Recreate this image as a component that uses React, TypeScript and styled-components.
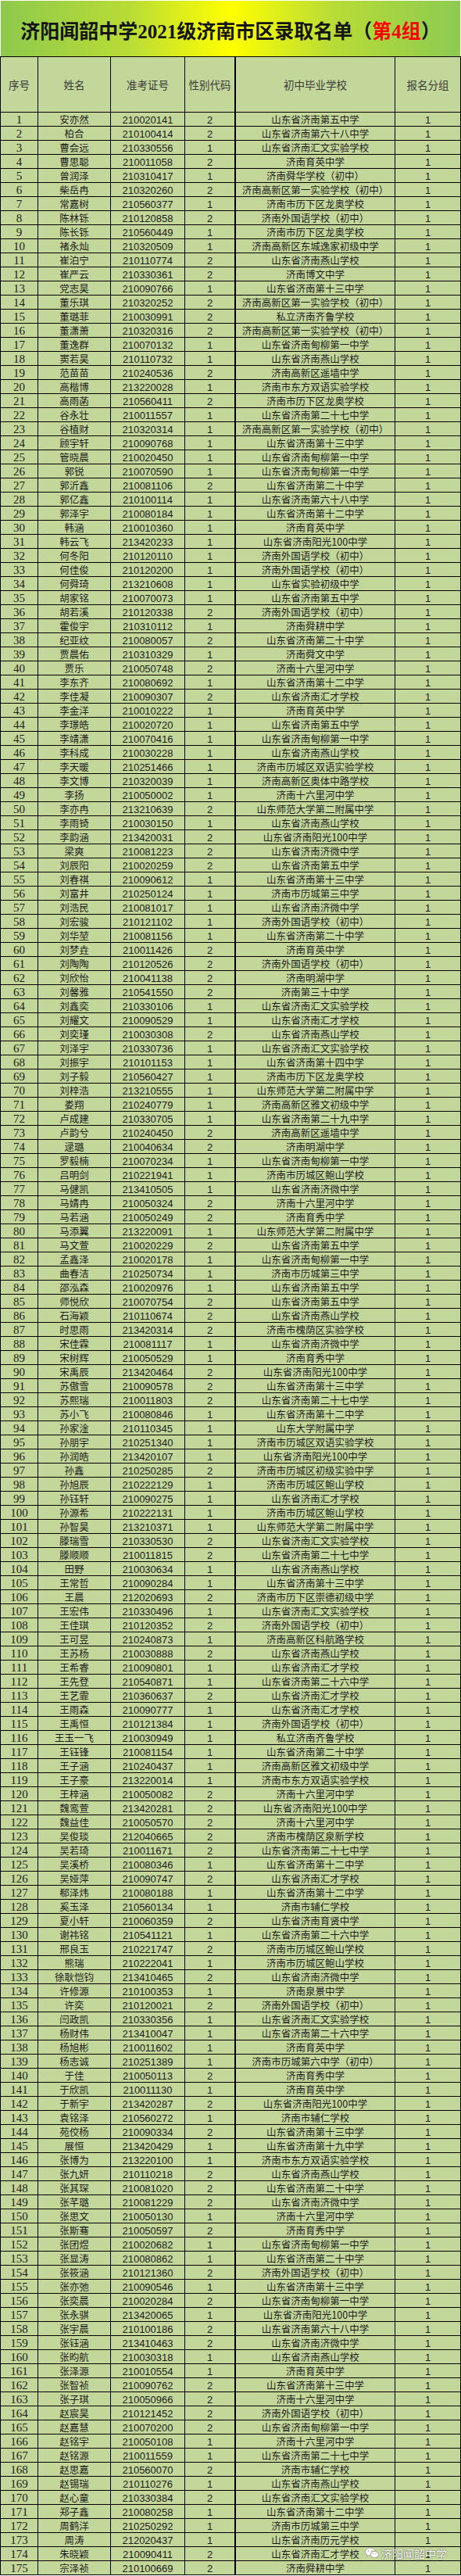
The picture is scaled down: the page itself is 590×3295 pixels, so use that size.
import styled, { createGlobalStyle } from "styled-components";

type Student = [string, string, number, string];

const SCHOOL = {
  wu: "山东省济南第五中学",
  s68: "山东省济南第六十八中学",
  huiwen: "山东省济南汇文实验学校",
  yuying: "济南育英中学",
  shunhua: "济南舜华学校（初中）",
  gx1: "济南高新区第一实验学校（初中）",
  longao: "济南市历下区龙奥学校",
  waiguoyu: "济南外国语学校（初中）",
  dongcheng: "济南高新区东城逸家初级中学",
  yanshan: "山东省济南燕山学校",
  bowen: "济南博文中学",
  s13: "山东省济南第十三中学",
  qilu: "私立济南齐鲁学校",
  dianliu: "山东省济南甸柳第一中学",
  yaoqiang: "济南高新区遥墙中学",
  dongfang: "济南市东方双语实验学校",
  s27: "山东省济南第二十七中学",
  s20: "山东省济南第二十中学",
  s12: "山东省济南第十二中学",
  yangguang: "山东省济南阳光100中学",
  shiyan: "山东省实验初级中学",
  shungeng: "济南舜耕中学",
  shunwen: "济南舜文中学",
  shiliuli: "济南十六里河中学",
  huicai: "山东省济南汇才学校",
  lcShuangyu: "济南市历城区双语实验学校",
  aoti: "济南高新区奥体中路学校",
  shida2: "山东师范大学第二附属中学",
  jiwei: "山东省济南济微中学",
  lc3: "济南市历城第三中学",
  minghu: "济南明湖中学",
  s30: "济南第三十中学",
  s14: "山东省济南第十四中学",
  yawen: "济南高新区雅文初级中学",
  s29: "山东省济南第二十九中学",
  baoshan: "济南市历城区鲍山学校",
  yuxiu: "济南育秀中学",
  huaiyin: "济南市槐荫区实验学校",
  shanda: "山东大学附属中学",
  lcChuji: "济南市历城区初级实验中学",
  chongde: "济南市历下区崇德初级中学",
  kehang: "济南高新区科航路学校",
  s26: "山东省济南第二十六中学",
  quanxin: "济南市槐荫区泉新学校",
  furen: "济南市辅仁学校",
  yuxian: "山东省济南育贤中学",
  quanjing: "济南泉景中学",
  lc6: "济南市历城第六中学（初中）",
  s19: "山东省济南第十九中学",
  liyuan: "山东省济南历元学校",
};

const S = SCHOOL;

const students: Student[] = [
  ["安亦然", "210020141", 2, S.wu],
  ["柏合", "210100414", 2, S.s68],
  ["曹会远", "210330556", 1, S.huiwen],
  ["曹思聪", "210011058", 2, S.yuying],
  ["曾润泽", "210310417", 1, S.shunhua],
  ["柴岳冉", "210320260", 2, S.gx1],
  ["常嘉树", "210560377", 1, S.longao],
  ["陈林铄", "210120858", 2, S.waiguoyu],
  ["陈长铄", "210560449", 1, S.longao],
  ["褚永灿", "210320509", 1, S.dongcheng],
  ["崔泊宁", "210110774", 2, S.yanshan],
  ["崔严云", "210330361", 2, S.bowen],
  ["党志昊", "210090766", 1, S.s13],
  ["董乐琪", "210320252", 2, S.gx1],
  ["董璐菲", "210030991", 2, S.qilu],
  ["董潇萧", "210320316", 2, S.gx1],
  ["董逸群", "210070132", 1, S.dianliu],
  ["窦若昊", "210110732", 1, S.yanshan],
  ["范苗苗", "210240536", 2, S.yaoqiang],
  ["高楷博", "213220028", 1, S.dongfang],
  ["高雨菡", "210560411", 2, S.longao],
  ["谷永壮", "210011557", 1, S.s27],
  ["谷植财", "210320314", 1, S.gx1],
  ["顾宇轩", "210090768", 1, S.s13],
  ["管晓晨", "210020450", 1, S.dianliu],
  ["郭锐", "210070590", 1, S.dianliu],
  ["郭沂鑫", "210081106", 2, S.s20],
  ["郭亿鑫", "210100114", 1, S.s68],
  ["郭泽宇", "210080184", 1, S.s12],
  ["韩涵", "210010360", 1, S.yuying],
  ["韩云飞", "213420233", 1, S.yangguang],
  ["何冬阳", "210120110", 1, S.waiguoyu],
  ["何佳俊", "210120200", 1, S.waiguoyu],
  ["何舜琦", "213210608", 1, S.shiyan],
  ["胡家铭", "210070073", 1, S.wu],
  ["胡若溪", "210120338", 2, S.waiguoyu],
  ["霍俊宇", "210310112", 1, S.shungeng],
  ["纪亚纹", "210080057", 2, S.s20],
  ["贾晨佑", "210310329", 1, S.shunwen],
  ["贾乐", "210050748", 2, S.shiliuli],
  ["李东齐", "210080692", 1, S.s12],
  ["李佳凝", "210090307", 2, S.huicai],
  ["李金洋", "210010222", 1, S.yuying],
  ["李璟皓", "210020720", 1, S.wu],
  ["李靖潇", "210070416", 1, S.dianliu],
  ["李科成", "210030228", 1, S.yanshan],
  ["李天暖", "210251466", 1, S.lcShuangyu],
  ["李文博", "210320039", 1, S.aoti],
  ["李扬", "210050002", 1, S.shiliuli],
  ["李亦冉", "213210639", 2, S.shida2],
  ["李雨锜", "210030150", 1, S.yanshan],
  ["李韵涵", "213420031", 2, S.yangguang],
  ["梁爽", "210081223", 2, S.jiwei],
  ["刘辰阳", "210020259", 2, S.wu],
  ["刘春祺", "210090612", 1, S.s13],
  ["刘富井", "210250124", 1, S.lc3],
  ["刘浩民", "210081017", 1, S.jiwei],
  ["刘宏骏", "210121102", 1, S.waiguoyu],
  ["刘华堃", "210081156", 1, S.s20],
  ["刘梦垚", "210011426", 2, S.yuying],
  ["刘陶陶", "210120526", 2, S.waiguoyu],
  ["刘欣怡", "210041138", 2, S.minghu],
  ["刘馨雅", "210541550", 2, S.s30],
  ["刘鑫奕", "210330106", 1, S.huiwen],
  ["刘耀文", "210090529", 1, S.huicai],
  ["刘奕瑾", "210030308", 2, S.yanshan],
  ["刘泽宇", "210330736", 1, S.huiwen],
  ["刘振宇", "210101153", 1, S.s14],
  ["刘子毅", "210560427", 1, S.longao],
  ["刘梓浩", "213210555", 1, S.shida2],
  ["娄翔", "210240779", 1, S.yawen],
  ["卢成建", "210330705", 1, S.s29],
  ["卢韵兮", "210240450", 2, S.yaoqiang],
  ["逯璐", "210040634", 2, S.minghu],
  ["罗毅楠", "210070234", 1, S.dianliu],
  ["吕明剑", "210221941", 1, S.baoshan],
  ["马健凯", "213410505", 1, S.jiwei],
  ["马婧冉", "210050324", 2, S.shiliuli],
  ["马若涵", "210050249", 2, S.yuxiu],
  ["马添翼", "213220091", 1, S.shida2],
  ["马文萱", "210020229", 2, S.wu],
  ["孟鑫泽", "210020178", 1, S.dianliu],
  ["曲春洁", "210250734", 1, S.lc3],
  ["邵泓森", "210020976", 1, S.wu],
  ["师悦欣", "210070754", 2, S.wu],
  ["石海颖", "210110674", 2, S.yanshan],
  ["时思雨", "213420314", 2, S.huaiyin],
  ["宋佳霖", "210081117", 1, S.jiwei],
  ["宋树辉", "210050529", 1, S.yuxiu],
  ["宋禹辰", "213420464", 2, S.yangguang],
  ["苏傲雪", "210090578", 2, S.s13],
  ["苏熙瑞", "210011803", 2, S.s27],
  ["苏小飞", "210080846", 1, S.s12],
  ["孙家淦", "210110345", 1, S.shanda],
  ["孙朋宇", "210251340", 1, S.lcShuangyu],
  ["孙润皓", "213420107", 1, S.yangguang],
  ["孙鑫", "210250285", 2, S.lcChuji],
  ["孙旭辰", "210222129", 1, S.baoshan],
  ["孙钰轩", "210090275", 1, S.huicai],
  ["孙源希", "210222131", 1, S.baoshan],
  ["孙智昊", "213210371", 1, S.shida2],
  ["滕瑞雪", "210330530", 2, S.huiwen],
  ["滕顺顺", "210011815", 2, S.s27],
  ["田野", "210030634", 1, S.yanshan],
  ["王常哲", "210090284", 1, S.s13],
  ["王晨", "212020693", 2, S.chongde],
  ["王宏伟", "210330496", 1, S.huiwen],
  ["王佳琪", "210120352", 2, S.waiguoyu],
  ["王可昱", "210240873", 1, S.kehang],
  ["王苏杨", "210030888", 2, S.yanshan],
  ["王希睿", "210090801", 1, S.huicai],
  ["王先登", "210540871", 1, S.s26],
  ["王艺霏", "210360637", 2, S.huicai],
  ["王雨森", "210090777", 1, S.huicai],
  ["王禹恒", "210121384", 1, S.waiguoyu],
  ["王玉一飞", "210030949", 1, S.qilu],
  ["王钰锋", "210081154", 1, S.s20],
  ["王子涵", "210240437", 1, S.yawen],
  ["王子豪", "213220014", 1, S.dongfang],
  ["王梓涵", "210050082", 2, S.shiliuli],
  ["魏鸾萱", "213420281", 2, S.yangguang],
  ["魏益佳", "210050570", 2, S.shiliuli],
  ["吴俊琰", "212040665", 2, S.quanxin],
  ["吴若琦", "210011671", 2, S.s27],
  ["吴溪桥", "210080346", 1, S.s12],
  ["吴娅萍", "210090747", 2, S.huicai],
  ["郗泽炜", "210080188", 1, S.s12],
  ["奚玉泽", "210560134", 1, S.furen],
  ["夏小轩", "210060359", 2, S.yuxian],
  ["谢祎铭", "210541121", 1, S.s26],
  ["邢良玉", "210221747", 2, S.baoshan],
  ["熊瑞", "210222041", 1, S.baoshan],
  ["徐耿恺钧", "213410465", 2, S.jiwei],
  ["许修源", "210100353", 1, S.quanjing],
  ["许奕", "210120021", 2, S.waiguoyu],
  ["闫政凯", "210330356", 1, S.huiwen],
  ["杨财伟", "213410047", 1, S.s26],
  ["杨旭彬", "210011602", 1, S.yuying],
  ["杨志诚", "210251389", 1, S.lc6],
  ["于佳", "210050113", 2, S.yuxiu],
  ["于欣凯", "210011130", 1, S.yuying],
  ["于新宇", "213420287", 2, S.yangguang],
  ["袁铭泽", "210560272", 1, S.furen],
  ["苑佼杨", "210090334", 2, S.s13],
  ["展恒", "213420429", 1, S.s19],
  ["张博为", "213220100", 1, S.dongfang],
  ["张九妍", "210110218", 2, S.yanshan],
  ["张其琛", "210081020", 2, S.s20],
  ["张芊璐", "210081229", 2, S.jiwei],
  ["张思文", "210050130", 1, S.shiliuli],
  ["张斯骞", "210050597", 2, S.yuxiu],
  ["张团煜", "210020682", 1, S.dianliu],
  ["张显涛", "210080862", 1, S.s20],
  ["张筱涵", "210121360", 2, S.waiguoyu],
  ["张亦弛", "210090546", 1, S.s13],
  ["张奕晨", "210020284", 2, S.dianliu],
  ["张永骐", "213420065", 1, S.yangguang],
  ["张宇晨", "210100186", 2, S.s68],
  ["张钰涵", "213410463", 2, S.jiwei],
  ["张昀航", "210030318", 1, S.yanshan],
  ["张泽源", "210010554", 1, S.yuying],
  ["张智祯", "210090762", 2, S.s13],
  ["张子琪", "210050966", 2, S.shiliuli],
  ["赵宸昊", "210121452", 2, S.waiguoyu],
  ["赵嘉慧", "210070200", 2, S.dianliu],
  ["赵铭宇", "210050108", 1, S.shiliuli],
  ["赵铭源", "210011559", 1, S.s27],
  ["赵思嘉", "210560070", 2, S.furen],
  ["赵锡瑞", "210110276", 1, S.yanshan],
  ["赵心童", "210330384", 2, S.huiwen],
  ["郑子鑫", "210080258", 1, S.s12],
  ["周鹤洋", "210250292", 1, S.lc3],
  ["周涛", "212020437", 1, S.liyuan],
  ["朱晓颖", "210090411", 2, S.huicai],
  ["宗泽祯", "210100669", 2, S.shungeng],
];

const GlobalStyle = createGlobalStyle`
  html, body {
    margin: 0;
    padding: 0;
    background: #fff;
  }
  body {
    font-family: "Liberation Sans", "Noto Sans CJK SC", sans-serif;
  }
`;

const COLUMNS = "48px 93px 95px 65px 204px 84px";

const Page = styled.div`
  position: relative;
  width: 590px;
`;

const TitleBar = styled.div`
  box-sizing: border-box;
  height: 72px;
  border: 1px solid #fff;
  border-bottom: none;
  background: linear-gradient(
    90deg,
    #8ec94c 0%,
    #b9dc36 28%,
    #ffff00 50%,
    #b9dc36 72%,
    #8ccb52 100%
  );
  display: flex;
  align-items: center;
  justify-content: center;
  padding-top: 2px;
`;

const Title = styled.h1`
  margin: 0;
  font-family: "Liberation Serif", "Noto Sans CJK SC", serif;
  font-weight: 700;
  font-size: 25px;
  color: #141414;
  white-space: nowrap;
`;

const Red = styled.span`
  color: #ff0000;
`;

const Sheet = styled.div`
  border-top: 1px solid #000;
  background: #c4d79b;
`;

const Row = styled.div<{ $head?: boolean }>`
  display: grid;
  grid-template-columns: ${COLUMNS};
  height: ${(p) => (p.$head ? 71 : 18)}px;
  border-left: 1px solid #000;
`;

type Kind = "serif" | "sans" | "cjk";

const fonts: Record<Kind, string> = {
  serif: `"Liberation Serif", serif`,
  sans: `"Liberation Sans", sans-serif`,
  cjk: `"Noto Sans CJK SC", "Liberation Sans", sans-serif`,
};

const sizes: Record<Kind, number> = {
  serif: 15,
  sans: 13,
  cjk: 12.5,
};

const Cell = styled.div<{ $kind: Kind; $thick?: boolean }>`
  box-sizing: border-box;
  border-right: ${(p) => (p.$thick ? 2 : 1)}px solid #000;
  border-bottom: 1px solid #000;
  display: flex;
  align-items: center;
  justify-content: center;
  padding-top: 2px;
  overflow: hidden;
  white-space: nowrap;
  color: #1c1c1c;
  font-family: ${(p) => fonts[p.$kind]};
  font-size: ${(p) => sizes[p.$kind]}px;
  line-height: 1;
`;

const HeadCell = styled.div<{ $thick?: boolean }>`
  box-sizing: border-box;
  border-right: ${(p) => (p.$thick ? 2 : 1)}px solid #000;
  border-bottom: 1px solid #000;
  display: flex;
  align-items: center;
  justify-content: center;
  color: #3a3a3a;
  font-family: "Noto Sans CJK SC", sans-serif;
  font-size: 13.5px;
  white-space: nowrap;
`;

const Watermark = styled.div`
  position: absolute;
  right: 18px;
  bottom: 19px;
  display: flex;
  align-items: center;
  gap: 3px;
  color: #fff;
  font-family: "Noto Sans CJK SC", sans-serif;
  font-size: 14px;
  line-height: 18px;
  text-shadow: 0 0 2px rgba(0, 0, 0, 0.55), 0 0 1px rgba(0, 0, 0, 0.4);
`;

function WechatIcon() {
  return (
    <svg width="18" height="16" viewBox="0 0 24 21">
      <g fill="#fff" stroke="#8a8a8a" strokeWidth="0.9">
        <path d="M9 1.5c-4.5 0-8 2.9-8 6.5 0 2 1.1 3.8 2.9 5l-.7 2.4 2.8-1.5c1 .3 2 .5 3 .5.3 0 .6 0 .9 0-.2-.6-.3-1.2-.3-1.8 0-3.5 3.3-6.2 7.4-6.2.3 0 .5 0 .8 0C17 3.6 13.4 1.5 9 1.5z" />
        <path d="M23 12.4c0-3-2.9-5.3-6.6-5.3s-6.6 2.4-6.6 5.3 2.9 5.3 6.6 5.3c.8 0 1.6-.1 2.3-.4l2.2 1.2-.6-2c1.6-1 2.7-2.5 2.7-4.1z" />
      </g>
      <g fill="#8a8a8a">
        <circle cx="6.2" cy="6.4" r="1" />
        <circle cx="11.6" cy="6.4" r="1" />
        <circle cx="14.2" cy="11.2" r="0.8" />
        <circle cx="18.6" cy="11.2" r="0.8" />
      </g>
    </svg>
  );
}

export default function App() {
  return (
    <Page>
      <GlobalStyle />
      <TitleBar>
        <Title>
          济阳闻韶中学2021级济南市区录取名单（<Red>第4组</Red>）
        </Title>
      </TitleBar>
      <Sheet>
        <Row $head>
          <HeadCell>序号</HeadCell>
          <HeadCell>姓名</HeadCell>
          <HeadCell>准考证号</HeadCell>
          <HeadCell $thick>性别代码</HeadCell>
          <HeadCell>初中毕业学校</HeadCell>
          <HeadCell>报名分组</HeadCell>
        </Row>
        {students.map(([name, id, gender, school], i) => (
          <Row key={id}>
            <Cell $kind="serif">{i + 1}</Cell>
            <Cell $kind="cjk">{name}</Cell>
            <Cell $kind="sans">{id}</Cell>
            <Cell $kind="sans" $thick>
              {gender}
            </Cell>
            <Cell $kind="cjk">{school}</Cell>
            <Cell $kind="sans">1</Cell>
          </Row>
        ))}
      </Sheet>
      <Watermark>
        <WechatIcon />
        济阳闻韶中学
      </Watermark>
    </Page>
  );
}
